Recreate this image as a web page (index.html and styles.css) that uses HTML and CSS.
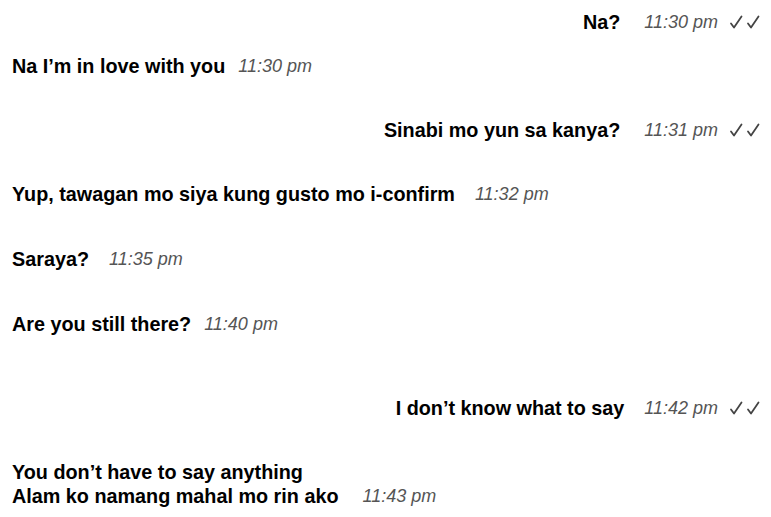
FILE: index.html
```html
<!DOCTYPE html>
<html lang="en">
<head>
<meta charset="utf-8">
<title>Chat</title>
<link rel="stylesheet" href="styles.css">
</head>
<body>
<main class="chat">
  <div class="row sent">
    <span class="text">Na?</span>
    <span class="time gap-l">11:30 pm</span>
    <svg class="ticks" viewBox="0 0 34 16" width="34" height="16" aria-label="read"><path d="M3 9.5 L6 13.5 L13.5 2.5"/><path d="M20 9.5 L23 13.5 L30.5 2.5"/></svg>
  </div>
  <div class="row recv after-short">
    <span class="text">Na I’m in love with you</span>
    <span class="time gap-s">11:30 pm</span>
  </div>
  <div class="row sent">
    <span class="text">Sinabi mo yun sa kanya?</span>
    <span class="time gap-l">11:31 pm</span>
    <svg class="ticks" viewBox="0 0 34 16" width="34" height="16" aria-label="read"><path d="M3 9.5 L6 13.5 L13.5 2.5"/><path d="M20 9.5 L23 13.5 L30.5 2.5"/></svg>
  </div>
  <div class="row recv">
    <span class="text">Yup, tawagan mo siya kung gusto mo i-confirm</span>
    <span class="time gap-m">11:32 pm</span>
  </div>
  <div class="row recv">
    <span class="text">Saraya?</span>
    <span class="time gap-m">11:35 pm</span>
  </div>
  <div class="row recv">
    <span class="text">Are you still there?</span>
    <span class="time gap-s">11:40 pm</span>
  </div>
  <div class="row sent after-long">
    <span class="text">I don’t know what to say</span>
    <span class="time gap-m">11:42 pm</span>
    <svg class="ticks" viewBox="0 0 34 16" width="34" height="16" aria-label="read"><path d="M3 9.5 L6 13.5 L13.5 2.5"/><path d="M20 9.5 L23 13.5 L30.5 2.5"/></svg>
  </div>
  <div class="row recv">
    <span class="text">You don’t have to say anything<br>Alam ko namang mahal mo rin ako</span>
    <span class="time gap-l">11:43 pm</span>
  </div>
</main>
</body>
</html>
```
FILE: styles.css
```css
html, body {
  margin: 0;
  padding: 0;
  background: #ffffff;
}

body {
  font-family: "Liberation Sans", Arial, sans-serif;
  color: #000000;
}

.chat {
  display: flex;
  flex-direction: column;
  padding: 10px 9px 0 12px;
}

.row {
  display: flex;
  align-items: flex-end;
  line-height: 24px;
  margin-top: 40px;
}

.row:first-child {
  margin-top: 0;
}

.row.after-short {
  margin-top: 20px;
}

.row.after-long {
  margin-top: 60px;
}

.row.recv + .row.recv {
  margin-top: 41px;
}

.row.sent {
  justify-content: flex-end;
}

.text {
  font-weight: 700;
  font-size: 19.8px;
}

.time {
  font-style: italic;
  font-size: 18px;
  color: #555555;
}

.gap-s { margin-left: 13px; }
.gap-m { margin-left: 20px; }
.gap-l { margin-left: 24px; }

.ticks {
  margin-left: 10px;
  margin-bottom: 4px;
  fill: none;
  stroke: #444444;
  stroke-width: 1.8;
  stroke-linecap: round;
  stroke-linejoin: round;
}
```
